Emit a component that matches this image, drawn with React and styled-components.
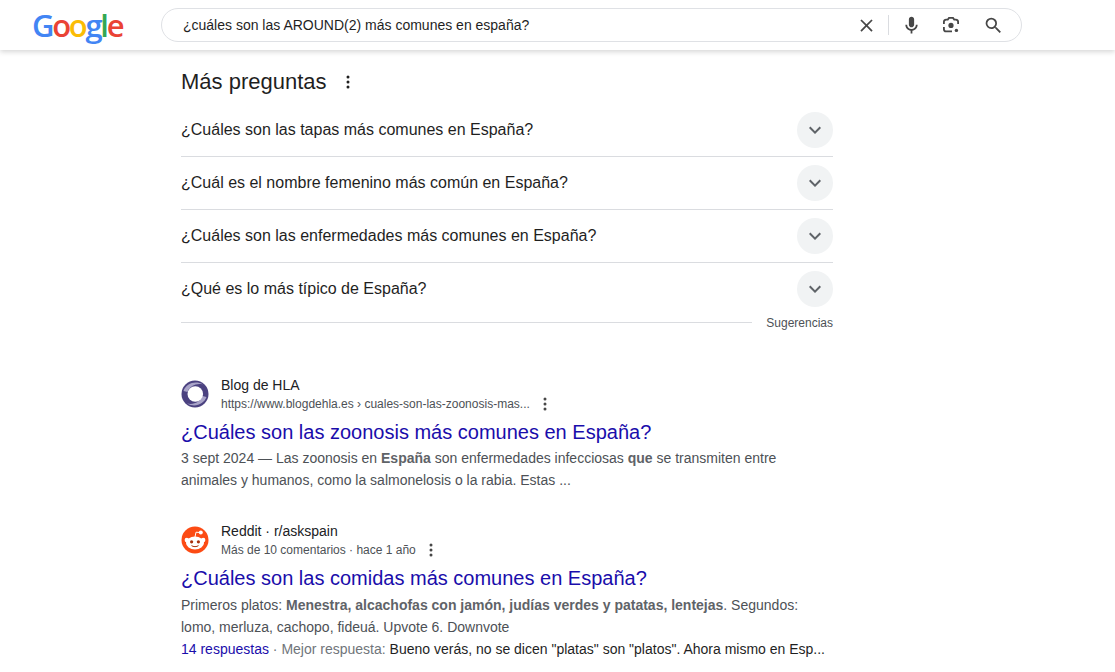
import React from 'react';
import styled, { createGlobalStyle } from 'styled-components';

const GlobalStyle = createGlobalStyle`
  html, body {
    margin: 0;
    height: 100%;
    overflow: hidden;
    background: #fff;
    font-family: "Liberation Sans", Arial, sans-serif;
    color: #1f1f1f;
  }
`;

const Header = styled.header`
  display: flex;
  align-items: center;
  height: 50px;
  box-sizing: border-box;
  background: #fff;
  box-shadow: 0 2px 5px rgba(0, 0, 0, 0.16);
`;

const Logo = styled.div`
  width: 161px;
  box-sizing: border-box;
  padding-left: 32px;
  font-family: "Open Sans", sans-serif;
  font-size: 31px;
  font-weight: 600;
  letter-spacing: -2.3px;
  line-height: 50px;
  height: 50px;
`;

const LogoLetter = styled.span`
  color: ${(p) => p.$color};
`;

const SearchBox = styled.div`
  display: flex;
  align-items: center;
  width: 861px;
  height: 34px;
  box-sizing: border-box;
  padding: 0 6px 0 21px;
  border: 1px solid #dfe1e5;
  border-radius: 17px;
`;

const SearchText = styled.div`
  flex: 1;
  font-size: 14px;
  color: #1f1f1f;
`;

const IconButton = styled.span`
  display: flex;
  width: ${(p) => p.$width || 40}px;
  justify-content: center;
  color: ${(p) => p.$color || '#474747'};
`;

const Divider = styled.span`
  width: 1px;
  height: 20px;
  background: #dadce0;
  margin: 0 2px;
`;

const Main = styled.main`
  width: 652px;
  margin-left: 181px;
`;

const SectionTitle = styled.div`
  display: flex;
  align-items: center;
  gap: 13px;
  height: 25px;
  margin-top: 19px;
  font-size: 22px;
  color: #1f1f1f;
`;

const QuestionList = styled.div`
  margin-top: 10px;
`;

const Question = styled.div`
  display: flex;
  align-items: center;
  justify-content: space-between;
  height: 53px;
  box-sizing: border-box;
  font-size: 16px;
  color: #1f1f1f;
  border-bottom: 1px solid ${(p) => (p.$last ? 'transparent' : '#dadce0')};
`;

const Chevron = styled.span`
  display: flex;
  align-items: center;
  justify-content: center;
  width: 36px;
  height: 36px;
  border-radius: 50%;
  background: #f1f3f4;
  color: #5f6368;
`;

const Feedback = styled.div`
  display: flex;
  align-items: center;
  gap: 14px;
  margin-top: -2px;
  height: 16px;
  font-size: 12px;
  color: #4d5156;
`;

const FeedbackLabel = styled.span`
  margin-top: 2px;
`;

const Rule = styled.span`
  flex: 1;
  height: 1px;
  background: #dadce0;
`;

const ResultList = styled.div`
  display: flex;
  flex-direction: column;
  gap: 35px;
  margin-top: 50px;
`;

const Result = styled.article`
  width: 652px;
`;

const Source = styled.div`
  display: flex;
  align-items: center;
  gap: 12px;
  height: 28px;
`;

const Favicon = styled.span`
  display: flex;
  width: 28px;
  height: 28px;
  flex: none;
`;

const SourceText = styled.div`
  display: flex;
  flex-direction: column;
  gap: 1px;
`;

const SiteName = styled.div`
  font-size: 14px;
  line-height: 18px;
  color: #202124;
`;

const SiteUrl = styled.div`
  display: flex;
  align-items: center;
  font-size: 12px;
  line-height: 18px;
  color: #4d5156;
`;

const MoreWrap = styled.span`
  display: flex;
  margin-left: 7px;
  color: #474747;
`;

const ResultTitle = styled.a`
  display: block;
  margin-top: 11px;
  font-size: 20px;
  line-height: 26px;
  color: #1a0dab;
`;

const Snippet = styled.div`
  margin-top: ${(p) => p.$top || 2}px;
  font-size: 14px;
  line-height: 22px;
  color: #4d5156;
  white-space: nowrap;

  b {
    font-weight: 700;
    color: #5f6368;
  }
`;

const Answer = styled.div`
  font-size: 14px;
  line-height: 22px;
  color: #70757a;
  white-space: nowrap;
`;

const AnswerLink = styled.span`
  color: #1a0dab;
`;

const AnswerText = styled.span`
  color: #1f1f1f;
`;

const Glyph = ({ d, size = 24 }) => (
  <svg width={size} height={size} viewBox="0 0 24 24" fill="currentColor">
    <path d={d} />
  </svg>
);

const CLOSE = 'M19 6.41L17.59 5 12 10.59 6.41 5 5 6.41 10.59 12 5 17.59 6.41 19 12 13.41 17.59 19 19 17.59 13.41 12z';
const MIC = 'M12 14c1.66 0 3-1.34 3-3V5c0-1.66-1.34-3-3-3S9 3.34 9 5v6c0 1.66 1.34 3 3 3zM17 11c0 2.76-2.24 5-5 5s-5-2.24-5-5H5c0 3.53 2.61 6.43 6 6.92V21h2v-3.08c3.39-.49 6-3.39 6-6.92h-2z';
const SEARCH = 'M15.5 14h-.79l-.28-.27A6.471 6.471 0 0 0 16 9.5 6.5 6.5 0 1 0 9.5 16c1.61 0 3.09-.59 4.23-1.57l.27.28v.79l5 4.99L20.49 19l-4.99-5zm-6 0C7.01 14 5 11.99 5 9.5S7.01 5 9.5 5 14 7.01 14 9.5 11.99 14 9.5 14z';
const CHEVRON = 'M16.59 8.59 12 13.17 7.41 8.59 6 10l6 6 6-6z';

const MoreIcon = ({ size = 16 }) => (
  <svg width={size} height={size} viewBox="0 0 16 16" fill="currentColor">
    <circle cx="8" cy="3" r="1.5" />
    <circle cx="8" cy="8" r="1.5" />
    <circle cx="8" cy="13" r="1.5" />
  </svg>
);

const LensIcon = () => (
  <svg width="20" height="20" viewBox="0 0 20 20" fill="none" stroke="currentColor" strokeWidth="1.8">
    <path d="M2.9 9V6.8a2.2 2.2 0 0 1 2.2-2.2h1.7l1.2-1.7h4l1.2 1.7h1.7a2.2 2.2 0 0 1 2.2 2.2V9" />
    <path d="M2.9 12v2.2a2.2 2.2 0 0 0 2.2 2.2H11" />
    <circle cx="10" cy="10.4" r="2.6" fill="currentColor" stroke="none" />
    <circle cx="15.4" cy="15.4" r="1.7" fill="currentColor" stroke="none" />
  </svg>
);

const HlaIcon = () => (
  <svg width="28" height="28" viewBox="0 0 28 28">
    <circle cx="14" cy="14" r="13.5" fill="#4b4280" />
    <path d="M2.5 11 C5 4 14 0 22 4.5 C15 3 9 6 6.5 12z" fill="#a9a4c8" />
    <path d="M25.5 17 C23 24 14 28 6 23.5 C13 25 19 22 21.5 16z" fill="#a9a4c8" />
    <circle cx="14.3" cy="14" r="7.8" fill="#fff" />
  </svg>
);

const RedditIcon = () => (
  <svg width="28" height="28" viewBox="0 0 28 28">
    <circle cx="14" cy="14" r="13.5" fill="#fc4b14" />
    <ellipse cx="14" cy="17" rx="9" ry="6.4" fill="#fff" />
    <circle cx="5.8" cy="14" r="2.2" fill="#fff" />
    <circle cx="22.2" cy="14" r="2.2" fill="#fff" />
    <circle cx="19.8" cy="6.5" r="2" fill="#fff" />
    <path d="M14 11 L15 6.2 L19 6.5" stroke="#fff" strokeWidth="1" fill="none" />
    <circle cx="10.6" cy="15.8" r="1.6" fill="#a8300c" />
    <circle cx="17.4" cy="15.8" r="1.6" fill="#a8300c" />
    <path d="M10.5 19.6 C12 21 16 21 17.5 19.6" stroke="#a8300c" strokeWidth="1" fill="none" />
  </svg>
);

const questions = [
  '¿Cuáles son las tapas más comunes en España?',
  '¿Cuál es el nombre femenino más común en España?',
  '¿Cuáles son las enfermedades más comunes en España?',
  '¿Qué es lo más típico de España?',
];

const logoLetters = [
  ['G', '#4285f4'],
  ['o', '#ea4335'],
  ['o', '#fbbc05'],
  ['g', '#4285f4'],
  ['l', '#34a853'],
  ['e', '#ea4335'],
];

export default function App() {
  return (
    <>
      <GlobalStyle />
      <Header>
        <Logo>
          {logoLetters.map(([letter, color], i) => (
            <LogoLetter key={i} $color={color}>{letter}</LogoLetter>
          ))}
        </Logo>
        <SearchBox>
          <SearchText>¿cuáles son las AROUND(2) más comunes en españa?</SearchText>
          <IconButton><Glyph d={CLOSE} size={21} /></IconButton>
          <Divider />
          <IconButton><Glyph d={MIC} size={21} /></IconButton>
          <IconButton><LensIcon /></IconButton>
          <IconButton $width={44}><Glyph d={SEARCH} size={21} /></IconButton>
        </SearchBox>
      </Header>
      <Main>
        <SectionTitle>
          Más preguntas
          <MoreIcon />
        </SectionTitle>
        <QuestionList>
          {questions.map((q, i) => (
            <Question key={q} $last={i === questions.length - 1}>
              {q}
              <Chevron><Glyph d={CHEVRON} /></Chevron>
            </Question>
          ))}
        </QuestionList>
        <Feedback>
          <Rule />
          <FeedbackLabel>Sugerencias</FeedbackLabel>
        </Feedback>
        <ResultList>
          <Result>
            <Source>
              <Favicon><HlaIcon /></Favicon>
              <SourceText>
                <SiteName>Blog de HLA</SiteName>
                <SiteUrl>
                  https://www.blogdehla.es › cuales-son-las-zoonosis-mas...
                  <MoreWrap><MoreIcon /></MoreWrap>
                </SiteUrl>
              </SourceText>
            </Source>
            <ResultTitle>¿Cuáles son las zoonosis más comunes en España?</ResultTitle>
            <Snippet>
              3 sept 2024 — Las zoonosis en <b>España</b> son enfermedades infecciosas <b>que</b> se transmiten entre
              <br />
              animales y humanos, como la salmonelosis o la rabia. Estas ...
            </Snippet>
          </Result>
          <Result>
            <Source>
              <Favicon><RedditIcon /></Favicon>
              <SourceText>
                <SiteName>Reddit · r/askspain</SiteName>
                <SiteUrl>
                  Más de 10 comentarios · hace 1 año
                  <MoreWrap><MoreIcon /></MoreWrap>
                </SiteUrl>
              </SourceText>
            </Source>
            <ResultTitle>¿Cuáles son las comidas más comunes en España?</ResultTitle>
            <Snippet $top={3}>
              Primeros platos: <b>Menestra, alcachofas con jamón, judías verdes y patatas, lentejas</b>. Segundos:
              <br />
              lomo, merluza, cachopo, fideuá. Upvote 6. Downvote
            </Snippet>
            <Answer>
              <AnswerLink>14 respuestas</AnswerLink> · Mejor respuesta: <AnswerText>Bueno verás, no se dicen "platas" son "platos". Ahora mismo en Esp...</AnswerText>
            </Answer>
          </Result>
        </ResultList>
      </Main>
    </>
  );
}
